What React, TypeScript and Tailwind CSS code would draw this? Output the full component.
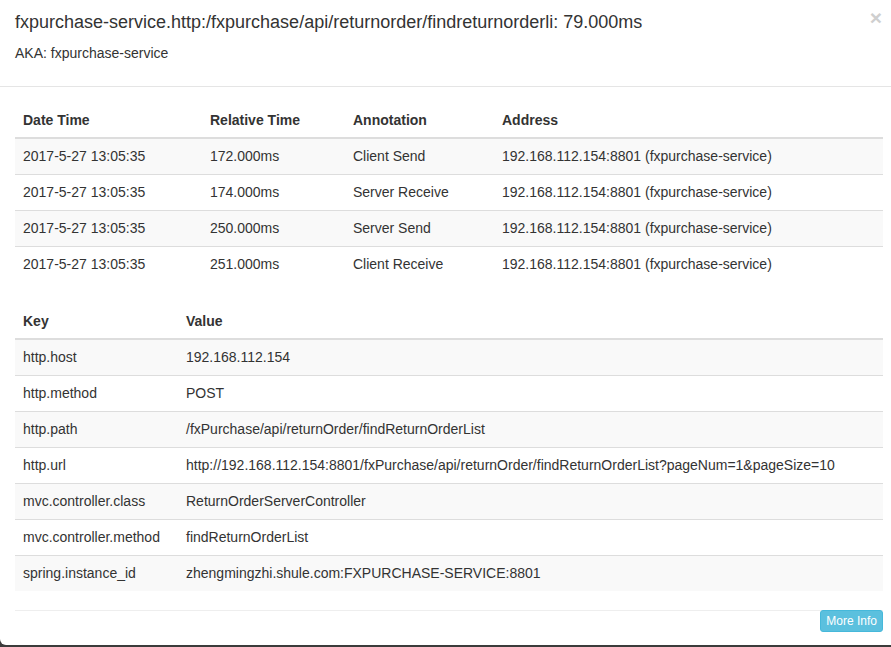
import React from "react";

const spans = [
  ["2017-5-27 13:05:35", "172.000ms", "Client Send", "192.168.112.154:8801 (fxpurchase-service)"],
  ["2017-5-27 13:05:35", "174.000ms", "Server Receive", "192.168.112.154:8801 (fxpurchase-service)"],
  ["2017-5-27 13:05:35", "250.000ms", "Server Send", "192.168.112.154:8801 (fxpurchase-service)"],
  ["2017-5-27 13:05:35", "251.000ms", "Client Receive", "192.168.112.154:8801 (fxpurchase-service)"],
];

const tags = [
  ["http.host", "192.168.112.154"],
  ["http.method", "POST"],
  ["http.path", "/fxPurchase/api/returnOrder/findReturnOrderList"],
  ["http.url", "http://192.168.112.154:8801/fxPurchase/api/returnOrder/findReturnOrderList?pageNum=1&pageSize=10"],
  ["mvc.controller.class", "ReturnOrderServerController"],
  ["mvc.controller.method", "findReturnOrderList"],
  ["spring.instance_id", "zhengmingzhi.shule.com:FXPURCHASE-SERVICE:8801"],
];

export default function App() {
  return (
    <div className="w-[891px] h-[647px] overflow-hidden bg-[#3b3b3b] text-[#333] font-['Liberation_Sans',Arial,sans-serif]">
      <div className="w-[898px] h-[645px] bg-white rounded-b-[6px] flex flex-col">
        {/* header */}
        <div className="relative h-[87px] border-b border-[#e5e5e5] px-[15px] pt-[12px]">
          <div className="text-[18px] leading-[20px] whitespace-nowrap">
            fxpurchase-service.http:/fxpurchase/api/returnorder/findreturnorderli: 79.000ms
          </div>
          <div className="mt-[11px] text-[14px] leading-[20px]">AKA: fxpurchase-service</div>
          <div className="absolute right-[16px] top-[7px] text-[21px] font-bold leading-[21px] text-[#cfcfcf]">×</div>
        </div>
        {/* body */}
        <div className="px-[15px] pt-[15px]">
          <table className="w-[868px] table-fixed border-collapse text-[14px] leading-[20px] mb-[21px]">
            <colgroup>
              <col className="w-[187px]" />
              <col className="w-[143px]" />
              <col className="w-[149px]" />
              <col />
            </colgroup>
            <thead>
              <tr>
                {["Date Time", "Relative Time", "Annotation", "Address"].map((h) => (
                  <th key={h} className="text-left font-bold px-[8px] h-[36px] py-0 border-b-2 border-[#ddd] align-middle">
                    {h}
                  </th>
                ))}
              </tr>
            </thead>
            <tbody>
              {spans.map((r, i) => (
                <tr key={i} className={i % 2 === 0 ? "bg-[#f9f9f9]" : ""}>
                  {r.map((c, j) => (
                    <td key={j} className="px-[8px] h-[36px] py-0 border-t border-[#ddd] align-middle whitespace-nowrap">
                      {c}
                    </td>
                  ))}
                </tr>
              ))}
            </tbody>
          </table>
          <table className="w-[868px] table-fixed border-collapse text-[14px] leading-[20px] mb-[19px]">
            <colgroup>
              <col className="w-[163px]" />
              <col />
            </colgroup>
            <thead>
              <tr>
                {["Key", "Value"].map((h) => (
                  <th key={h} className="text-left font-bold px-[8px] h-[36px] py-0 border-b-2 border-[#ddd] align-middle">
                    {h}
                  </th>
                ))}
              </tr>
            </thead>
            <tbody>
              {tags.map((r, i) => (
                <tr key={i} className={i % 2 === 0 ? "bg-[#f9f9f9]" : ""}>
                  {r.map((c, j) => (
                    <td key={j} className="px-[8px] h-[36px] py-0 border-t border-[#ddd] align-middle whitespace-nowrap">
                      {c}
                    </td>
                  ))}
                </tr>
              ))}
            </tbody>
          </table>
          <div className="w-[868px] border-t border-[#eeeeee] flex justify-end">
            <button className="-mt-px h-[22px] px-[5px] rounded-[3px] bg-[#5bc0de] border border-[#46b8da] text-white text-[12px] leading-[18px]">
              More Info
            </button>
          </div>
        </div>
      </div>
    </div>
  );
}
